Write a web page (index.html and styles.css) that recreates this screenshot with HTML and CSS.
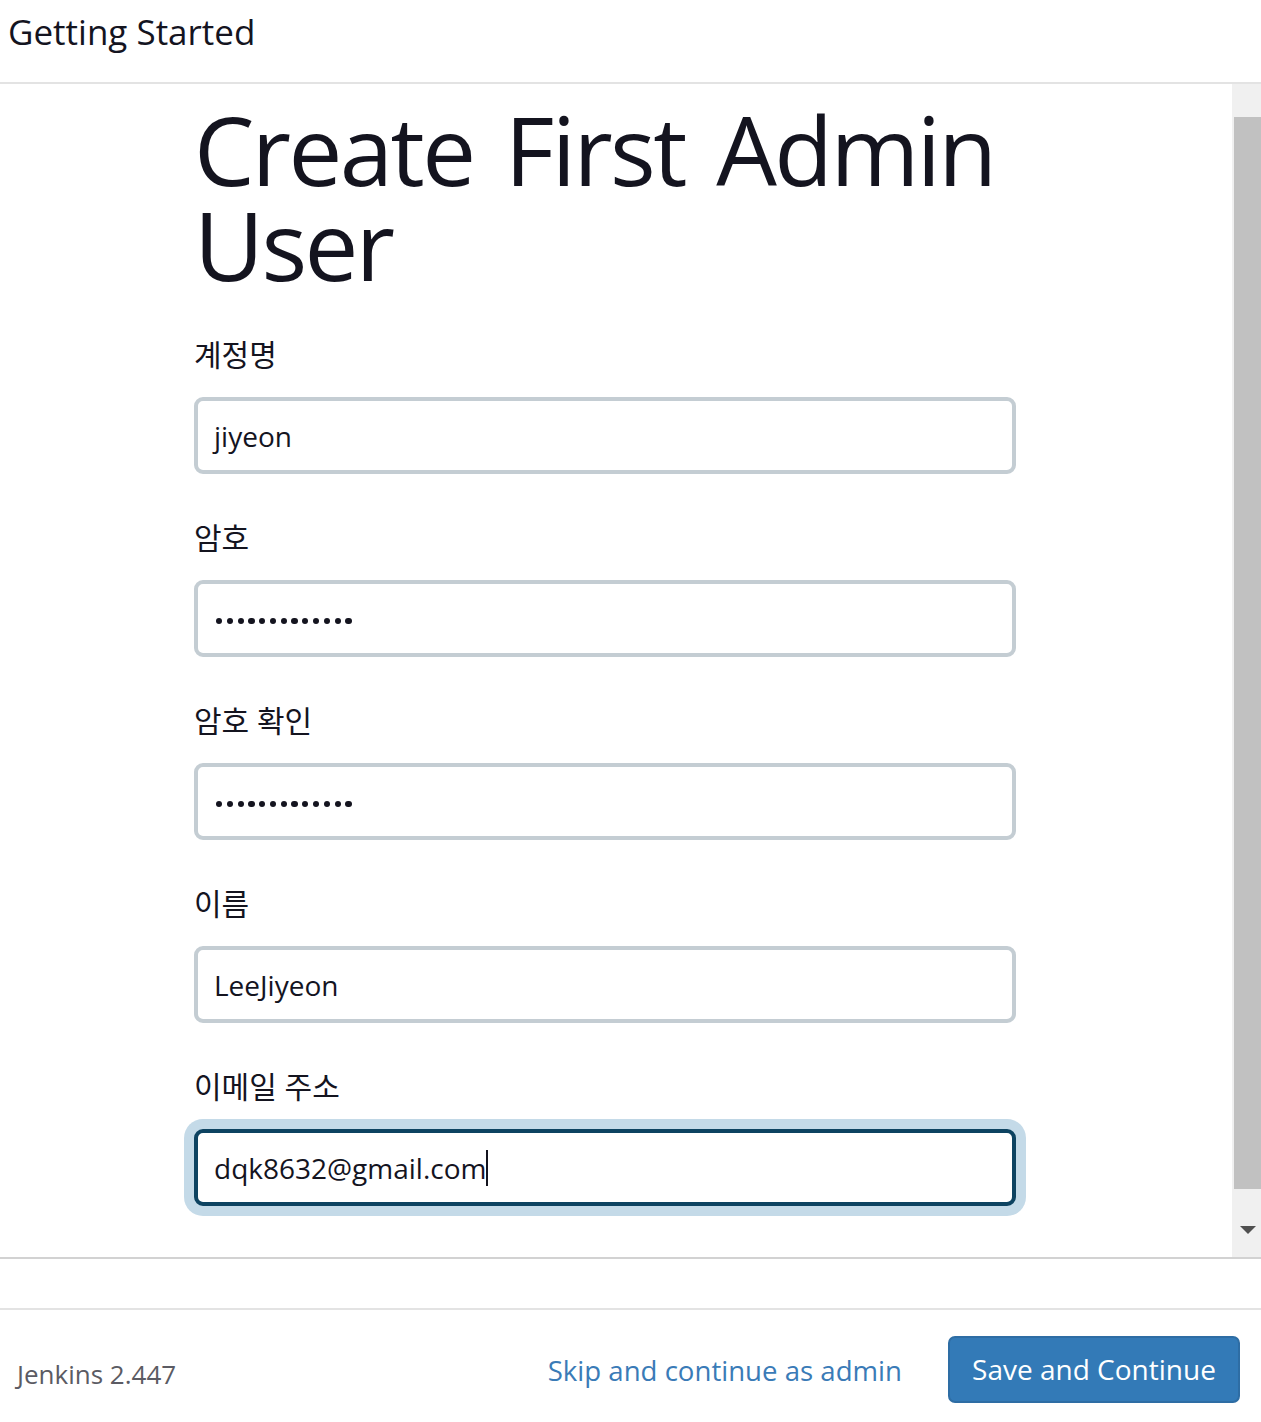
FILE: index.html
```html
<!DOCTYPE html>
<html lang="ko">
<head>
<meta charset="utf-8">
<title>Getting Started</title>
<link rel="stylesheet" href="styles.css">
</head>
<body>
<div class="page">
  <header class="top">
    <h2 class="top-title">Getting Started</h2>
  </header>
  <div class="scroll-area">
    <div class="content">
      <div class="form">
        <h1 class="title">Create First Admin User</h1>
        <div class="field">
          <div class="label">계정명</div>
          <div class="input"><span class="value">jiyeon</span></div>
        </div>
        <div class="field">
          <div class="label">암호</div>
          <div class="input"><span class="dots"><i></i><i></i><i></i><i></i><i></i><i></i><i></i><i></i><i></i><i></i><i></i><i></i><i></i></span></div>
        </div>
        <div class="field">
          <div class="label">암호 확인</div>
          <div class="input"><span class="dots"><i></i><i></i><i></i><i></i><i></i><i></i><i></i><i></i><i></i><i></i><i></i><i></i><i></i></span></div>
        </div>
        <div class="field">
          <div class="label">이름</div>
          <div class="input"><span class="value">LeeJiyeon</span></div>
        </div>
        <div class="field">
          <div class="label">이메일 주소</div>
          <div class="input focused"><span class="value">dqk8632@gmail.com</span><span class="caret"></span></div>
        </div>
      </div>
    </div>
    <div class="scrollbar">
      <div class="sb-button"></div>
      <div class="sb-thumb"></div>
      <div class="sb-rest"><span class="sb-arrow"></span></div>
    </div>
  </div>
  <div class="gap-band"></div>
  <footer class="footer">
    <span class="version">Jenkins 2.447</span>
    <a class="skip" href="#">Skip and continue as admin</a>
    <button class="save" type="button">Save and Continue</button>
  </footer>
</div>
</body>
</html>
```
FILE: styles.css
```css
html, body {
  margin: 0;
  padding: 0;
  background: #ffffff;
}
body {
  font-family: "Open Sans", "Noto Sans CJK KR", sans-serif;
  color: #14141f;
}
.page {
  width: 1261px;
  height: 1422px;
  display: flex;
  flex-direction: column;
  overflow: hidden;
}
.top {
  height: 82px;
  border-bottom: 2px solid #e3e3e3;
  display: flex;
  align-items: flex-start;
  padding-left: 8px;
  flex: none;
}
.top-title {
  margin: 0;
  font-weight: 400;
  font-size: 35px;
  line-height: 64px;
  color: #14141f;
}
.scroll-area {
  height: 1173px;
  flex: none;
  display: flex;
  border-bottom: 2px solid #d2d2d2;
}
.content {
  flex: 1;
  overflow: hidden;
  padding-left: 194px;
}
.form {
  width: 822px;
  padding-top: 17px;
}
.title {
  margin: 0 -30px 44px 0;
  font-weight: 400;
  font-size: 96px;
  letter-spacing: -2.6px;
  word-spacing: 9px;
  line-height: 95px;
  color: #14141f;
}
.field {
  margin-bottom: 44px;
}
.label {
  font-size: 30px;
  line-height: 40px;
  margin-bottom: 22px;
}
.input {
  box-sizing: border-box;
  height: 77px;
  border: 4px solid #c4cdd3;
  border-radius: 9px;
  display: flex;
  align-items: center;
  padding-left: 16px;
  font-size: 28px;
  background: #fff;
}
.input .value {
  line-height: 40px;
}
.input.focused {
  border-color: #0d4361;
  box-shadow: 0 0 0 10px #c4dae8;
  border-radius: 9px;
}
.caret {
  width: 2px;
  height: 36px;
  background: #14141f;
  margin-left: 0;
}
.dots {
  display: flex;
  gap: 4.6px;
  padding-left: 2px;
  padding-top: 5px;
}
.dots i {
  display: block;
  width: 6.2px;
  height: 6.2px;
  border-radius: 50%;
  background: #14141f;
}
.scrollbar {
  width: 29px;
  flex: none;
  background: #f0f0f0;
  display: flex;
  flex-direction: column;
}
.sb-button {
  height: 33px;
  flex: none;
}
.sb-thumb {
  height: 1072px;
  margin-left: 2px;
  background: #c1c1c1;
  flex: none;
}
.sb-rest {
  flex: 1;
  display: flex;
  justify-content: center;
  padding-top: 37px;
  padding-left: 2px;
}
.sb-arrow {
  width: 0;
  height: 0;
  border-left: 8px solid transparent;
  border-right: 8px solid transparent;
  border-top: 8px solid #505050;
}
.gap-band {
  height: 49px;
  border-bottom: 2px solid #e3e3e3;
  flex: none;
}
.footer {
  flex: 1;
  display: flex;
  align-items: center;
  padding: 0 21px 0 17px;
}
.version {
  font-size: 26px;
  color: #5b5b63;
  padding-top: 16px;
}
.skip {
  margin-left: auto;
  font-size: 27.6px;
  color: #3a7bb7;
  text-decoration: none;
  padding-top: 8px;
}
.save {
  margin-left: 46px;
  height: 67px;
  width: 292px;
  box-sizing: border-box;
  border: 2px solid #2e6da4;
  border-radius: 7px;
  background: #337ab7;
  color: #ffffff;
  font-family: "Open Sans", "Noto Sans CJK KR", sans-serif;
  font-size: 28px;
  padding: 0;
  margin-top: 6px;
}
```
